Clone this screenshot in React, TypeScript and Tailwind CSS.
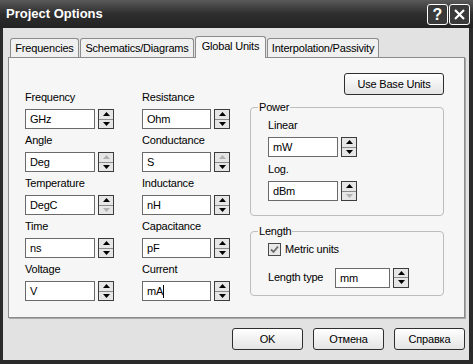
import React from "react";

const font = { fontFamily: '"Liberation Sans", Arial, sans-serif' };

function Spin({ up = true, down = true }: { up?: boolean; down?: boolean }) {
  return (
    <div className="w-[16px] h-[20px] border border-[#3c3c3c] bg-[#e6e6e6] flex flex-col shrink-0">
      <div className="flex-1 flex items-center justify-center border-b border-[#8a8a8a]">
        <svg width="7" height="4" viewBox="0 0 7 4">
          <path d="M3.5 0 L7 4 L0 4 Z" fill={up ? "#000" : "#b0b0b0"} />
        </svg>
      </div>
      <div className="flex-1 flex items-center justify-center">
        <svg width="7" height="4" viewBox="0 0 7 4">
          <path d="M0 0 L7 0 L3.5 4 Z" fill={down ? "#000" : "#b0b0b0"} />
        </svg>
      </div>
    </div>
  );
}

function Input({ value, w = 70, caret = false }: { value: string; w?: number; caret?: boolean }) {
  return (
    <div
      className="h-[20px] border border-[#6a6a6a] bg-white text-[11px] leading-[18px] pl-[4px] text-black flex items-center"
      style={{ width: w }}
    >
      <span>{value}</span>
      {caret && <span className="w-px h-[13px] bg-black" />}
    </div>
  );
}

function Field({ label, value, up, down, w = 70, caret }: { label: string; value: string; up?: boolean; down?: boolean; w?: number; caret?: boolean }) {
  return (
    <div className="flex flex-col">
      <div className="h-[13px] leading-[13px] text-[11px] text-black">{label}</div>
      <div className="flex items-center gap-[3px] mt-[5px]">
        <Input value={value} w={w} caret={caret} />
        <Spin up={up} down={down} />
      </div>
    </div>
  );
}

function Tab({ label, w, active = false }: { label: string; w: number; active?: boolean }) {
  return (
    <div
      className={
        active
          ? "h-[22px] bg-[#f6f6f6] border border-b-0 border-[#8c8c8c] rounded-t-[3px] text-[11px] flex items-center justify-center relative z-10 -mb-px pb-[2px]"
          : "h-[19px] bg-[#f0f0f0] border border-b-0 border-[#8c8c8c] rounded-t-[3px] text-[11px] flex items-center justify-center"
      }
      style={{ width: w }}
    >
      {label}
    </div>
  );
}

function Btn({ label, w = 71 }: { label: string; w?: number }) {
  return (
    <div
      className="h-[22px] border border-[#2e2e2e] rounded-[3px] bg-gradient-to-b from-[#ffffff] to-[#e4e4e4] text-[11px] flex items-center justify-center text-black"
      style={{ width: w }}
    >
      {label}
    </div>
  );
}

export default function App() {
  return (
    <div className="w-[473px] h-[364px] bg-[#2a2a2a] flex flex-col overflow-hidden" style={font}>
      {/* Title bar */}
      <div className="h-[28px] bg-gradient-to-b from-[#5a5a5a] via-[#2e2e2e] to-[#222222] flex items-center pl-[6px] pr-[3px] shrink-0">
        <div className="text-white font-bold text-[13px] flex-1">Project Options</div>
        <div className="flex gap-[1px] pt-[1px]">
          <div className="w-[21px] h-[21px] border border-white rounded-[3px] bg-[#3a3a3a] text-white text-[16px] font-bold flex items-center justify-center">?</div>
          <div className="w-[21px] h-[21px] border border-white rounded-[3px] bg-[#3a3a3a] flex items-center justify-center">
            <svg width="13" height="13" viewBox="0 0 13 13">
              <path d="M2 2 L11 11 M11 2 L2 11" stroke="#fff" strokeWidth="2.2" />
            </svg>
          </div>
        </div>
      </div>
      {/* Body */}
      <div className="flex-1 ml-[3px] mr-[4px] mb-[4px] bg-[#e2e2e2] flex flex-col pl-[5px] pr-[1px] pt-[7px] tracking-[-0.2px]">
        {/* tabs */}
        <div className="flex items-end gap-[1px] pl-[2px] h-[22px]">
          <Tab label="Frequencies" w={69} />
          <Tab label="Schematics/Diagrams" w={114} />
          <Tab label="Global Units" w={71} active />
          <Tab label="Interpolation/Passivity" w={112} />
        </div>
        {/* panel */}
        <div className="w-[457px] h-[261px] bg-[#f6f6f6] border border-[#8c8c8c] shadow-[1px_1px_0_#a8a8a8] flex pl-[16px] pt-[15px] text-black">
          {/* left */}
          <div className="flex gap-[28px] mt-[18px]">
            <div className="flex flex-col gap-[5px]">
              <Field label="Frequency" value="GHz" />
              <Field label="Angle" value="Deg" up={false} />
              <Field label="Temperature" value="DegC" down={false} />
              <Field label="Time" value="ns" />
              <Field label="Voltage" value="V" />
            </div>
            <div className="flex flex-col gap-[5px]">
              <Field label="Resistance" value="Ohm" w={69} />
              <Field label="Conductance" value="S" w={69} up={false} />
              <Field label="Inductance" value="nH" w={69} />
              <Field label="Capacitance" value="pF" w={69} />
              <Field label="Current" value="mA" w={69} caret />
            </div>
          </div>
          {/* right */}
          <div className="ml-[20px] w-[194px] flex flex-col">
            <div className="self-end">
              <Btn label="Use Base Units" w={100} />
            </div>
            <fieldset className="mt-[6px] border border-[#bdbdbd] rounded-[4px] h-[115px] px-[17px]">
              <legend className="text-[11px] px-[1px] -ml-[10px] leading-[13px]">Power</legend>
              <div className="flex flex-col gap-[6px] mt-[5px]">
                <Field label="Linear" value="mW" />
                <Field label="Log." value="dBm" down={false} />
              </div>
            </fieldset>
            <fieldset className="mt-[9px] border border-[#bdbdbd] rounded-[4px] h-[71px] px-[17px]">
              <legend className="text-[11px] px-[1px] -ml-[10px] leading-[13px]">Length</legend>
              <div className="flex items-center gap-[4px] mt-[3px]">
                <div className="w-[13px] h-[13px] border border-[#4a4a4a] bg-[#e8e8e8] flex items-center justify-center">
                  <svg width="9" height="9" viewBox="0 0 9 9">
                    <path d="M1 4.5 L3.5 7 L8 1.5" stroke="#6a6a6a" strokeWidth="1.8" fill="none" />
                  </svg>
                </div>
                <span className="text-[11px]">Metric units</span>
              </div>
              <div className="flex items-center mt-[10px]">
                <span className="text-[11px] w-[67px]">Length type</span>
                <div className="flex items-center gap-[3px]">
                  <Input value="mm" w={55} />
                  <Spin />
                </div>
              </div>
            </fieldset>
          </div>
        </div>
        {/* buttons */}
        <div className="flex justify-end gap-[10px] mt-[10px] w-[457px]">
          <Btn label="OK" />
          <Btn label="Отмена" />
          <Btn label="Справка" />
        </div>
      </div>
    </div>
  );
}
